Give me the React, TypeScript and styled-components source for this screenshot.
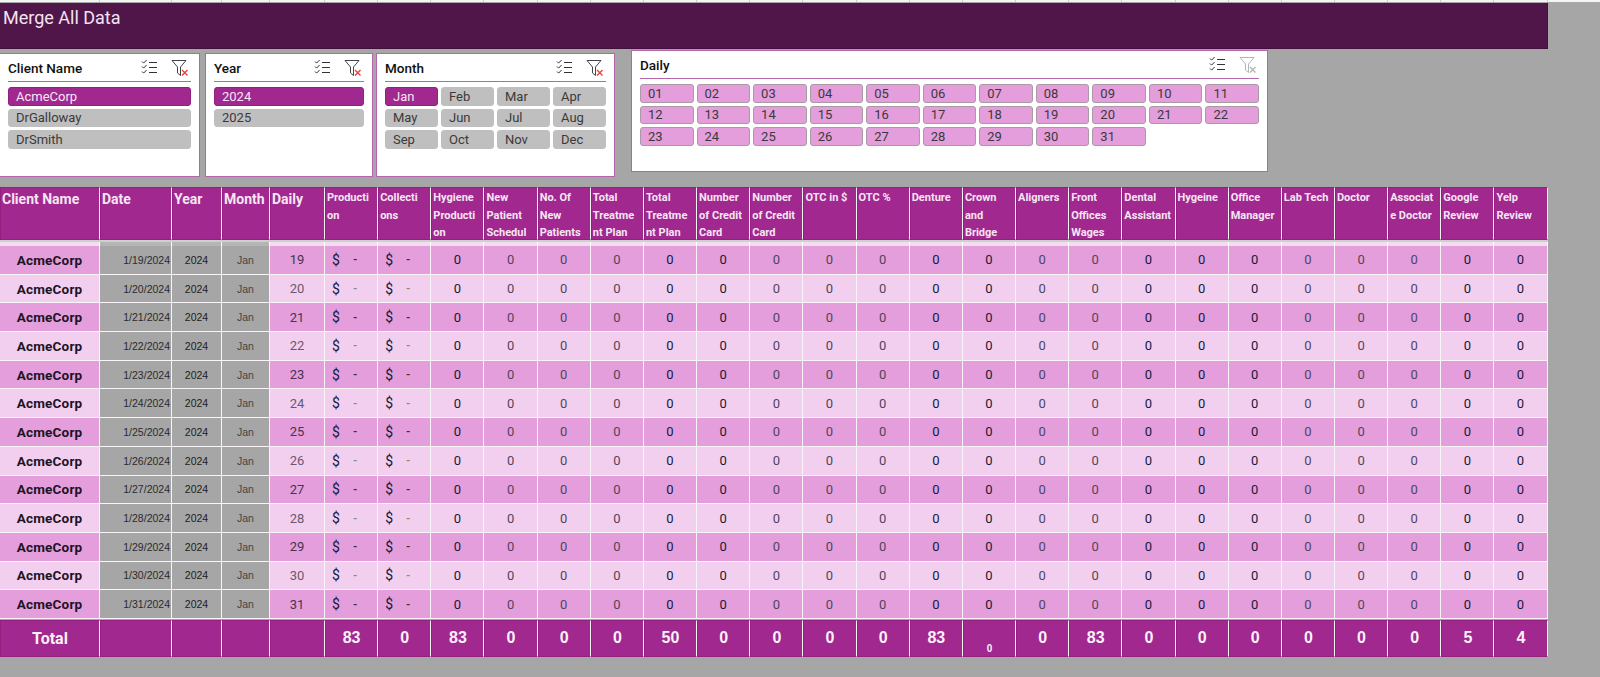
import styled, { createGlobalStyle } from 'styled-components';

const GlobalStyle = createGlobalStyle`
  html, body { margin: 0; padding: 0; background: #a6a6a6; }
  * { box-sizing: border-box; }
`;

const PURPLE = '#a0288f';
const COLUMNS = '100px 72px 50px 48px 55px repeat(23, 53.17px)';

const months = ['Jan', 'Feb', 'Mar', 'Apr', 'May', 'Jun', 'Jul', 'Aug', 'Sep', 'Oct', 'Nov', 'Dec'];
const days = Array.from({ length: 31 }, (_, i) => String(i + 1).padStart(2, '0'));
const rows = Array.from({ length: 13 }, (_, i) => 19 + i);

const headers: string[][] = [
  ['Client Name'], ['Date'], ['Year'], ['Month'], ['Daily'],
  ['Producti', 'on'], ['Collecti', 'ons'], ['Hygiene', 'Producti', 'on'], ['New', 'Patient', 'Schedul'],
  ['No. Of', 'New', 'Patients'], ['Total', 'Treatme', 'nt Plan'], ['Total', 'Treatme', 'nt Plan'],
  ['Number', 'of Credit', 'Card'], ['Number', 'of Credit', 'Card'], ['OTC in $'], ['OTC %'], ['Denture'],
  ['Crown', 'and', 'Bridge'], ['Aligners'], ['Front', 'Offices', 'Wages'], ['Dental', 'Assistant'], ['Hygeine'],
  ['Office', 'Manager'], ['Lab Tech'], ['Doctor'], ['Associat', 'e Doctor'], ['Google', 'Review'], ['Yelp', 'Review'],
];

// tono de los ceros por columna, desde Hygiene Production hasta Yelp Review
const zeroDark = [true, false, false, false, true, true, false, false, false, true, true, false, false, true, true, true, false, false, false, true, true];
const totals = ['83', '0', '83', '0', '0', '0', '50', '0', '0', '0', '0', '83', '0', '0', '83', '0', '0', '0', '0', '0', '0', '5', '4'];

const Page = styled.div`
  width: 1600px;
  height: 677px;
  overflow: hidden;
  background: #a6a6a6;
  font-family: Roboto, 'Liberation Sans', sans-serif;
`;

const TopStrip = styled.div`
  display: grid;
  grid-template-columns: ${COLUMNS};
  height: 3px;
  background: #f4f4f4;
  border-bottom: 1px solid #a8a8a8;
`;

const StripCell = styled.div`
  border-right: 1px solid #cfcfcf;
`;

const Banner = styled.div`
  width: 1548px;
  height: 46px;
  padding: 3px 0 0 3px;
  background: #50164a;
  border-right: 1px solid #43103d;
  border-bottom: 1px solid #43103d;
  color: #f3e3f0;
  font-size: 18px;
  line-height: 24px;
`;

const SlicerRow = styled.div`
  display: flex;
  align-items: flex-start;
  height: 139px;
  padding-top: 2px;
  margin-left: -1px;
`;

const Slicer = styled.section<{ $width: number; $height: number; $gap: number; $top: number }>`
  width: ${p => p.$width}px;
  height: ${p => p.$height}px;
  margin-left: ${p => p.$gap}px;
  margin-top: ${p => p.$top}px;
  padding: 0 8px;
  background: #fff;
  border: 1px solid #b565ab;
`;

const SlicerHead = styled.header`
  display: flex;
  align-items: center;
  height: 28px;
  margin-bottom: 5px;
  border-bottom: 1px solid #b565ab;
  color: #111;
  font-size: 13.5px;
  font-weight: 500;
`;

const SlicerTitle = styled.span`
  flex: 1;
`;

const HeadIcon = styled.svg<{ $right?: number }>`
  display: block;
  margin-right: ${p => p.$right ?? 0}px;
`;

const ItemGrid = styled.div<{ $cols: number }>`
  display: grid;
  grid-template-columns: repeat(${p => p.$cols}, 1fr);
  grid-auto-rows: 18.6px;
  gap: 3px;
`;

const Item = styled.div<{ $on?: boolean; $day?: boolean }>`
  display: flex;
  align-items: center;
  padding-left: 7px;
  border-radius: 3px;
  border: 1px solid ${p => (p.$on ? '#92207f' : p.$day ? '#a99aa6' : '#bfbfbf')};
  background: ${p => (p.$on ? PURPLE : p.$day ? '#e39edb' : '#bfbfbf')};
  color: ${p => (p.$on ? '#f7e6f3' : '#3a3a3a')};
  font-size: 13px;
`;

const Table = styled.div`
  width: 1548px;
  margin-top: -1px;
`;

const Row = styled.div<{ $height: number }>`
  display: grid;
  grid-template-columns: ${COLUMNS};
  height: ${p => p.$height}px;
`;

const HeadCell = styled.div<{ $big?: boolean }>`
  overflow: hidden;
  padding: ${p => (p.$big ? '4px 0 0 1px' : '1px 0 0 1px')};
  background: ${PURPLE};
  border: 1px solid #93207f;
  border-right: 1.5px solid #f4f4f4;
  color: #f6e6f3;
  font-size: ${p => (p.$big ? 14 : 11)}px;
  font-weight: 700;
  line-height: ${p => (p.$big ? 14 : 17.7)}px;
  white-space: nowrap;
`;

const HeadLine = styled.div``;

const Divider = styled.div`
  display: grid;
  grid-template-columns: ${COLUMNS};
  height: 6px;
  border-top: 2px solid #cfcfcf;
`;

const DividerCell = styled.div<{ $grey?: boolean }>`
  background: ${p => (p.$grey ? '#b5b5b5' : '#f3dcef')};
  border-right: 1.5px solid #fff;
`;

const Cell = styled.div<{ $odd: boolean; $grey?: boolean }>`
  display: flex;
  align-items: center;
  justify-content: center;
  background: ${p => (p.$grey ? '#a6a6a6' : p.$odd ? '#e39edb' : '#f3cfef')};
  border-right: 1.5px solid #f8f4f8;
  border-bottom: 1px solid #f8f4f8;
`;

const ClientCell = styled(Cell)`
  color: #1d1424;
  font-size: 13.5px;
  font-weight: 700;
  letter-spacing: 0.2px;
`;

const DateCell = styled(Cell)`
  justify-content: flex-end;
  padding-right: 1px;
  color: #2b2b2b;
  font-family: 'Liberation Sans', sans-serif;
  font-size: 10.5px;
`;

const YearCell = styled(Cell)`
  color: #1c1c1c;
  font-family: 'Liberation Sans', sans-serif;
  font-size: 10.5px;
`;

const MonthCell = styled(Cell)`
  color: #444;
  font-family: 'Liberation Sans', sans-serif;
  font-size: 10.5px;
`;

const DayCell = styled(Cell)`
  color: ${p => (p.$odd ? '#4a3350' : '#6a5870')};
  font-size: 13px;
`;

const MoneyCell = styled(Cell)`
  justify-content: flex-start;
  padding-left: 7px;
  color: #10203c;
  font-size: 14px;
`;

const Dash = styled.span<{ $odd: boolean }>`
  margin-left: 13px;
  color: ${p => (p.$odd ? '#333' : '#888')};
  font-size: 11px;
  font-weight: 700;
`;

const ZeroCell = styled(Cell)<{ $dark: boolean }>`
  color: ${p => (p.$dark ? '#161a3a' : '#50455c')};
  font-size: 13px;
`;

const TotalRow = styled(Row)`
  margin-top: 1px;
`;

const TotalCell = styled.div<{ $label?: boolean; $low?: boolean }>`
  display: flex;
  align-items: ${p => (p.$low ? 'flex-end' : 'center')};
  justify-content: center;
  padding-bottom: ${p => (p.$low ? 2 : 0)}px;
  background: ${PURPLE};
  border: 1px solid #93207f;
  border-right: 1.5px solid #f4f4f4;
  color: #fbf1f9;
  font-family: ${p => (p.$label ? 'Roboto, sans-serif' : "'Liberation Sans', sans-serif")};
  font-size: ${p => (p.$low ? 10 : 16)}px;
  font-weight: 700;
`;

const ChecklistIcon = () => (
  <HeadIcon $right={13} width="17" height="17" viewBox="0 0 17 17" fill="none" stroke="#333" strokeWidth="1">
    <path d="M1 2.5l1.6 1.6L5.6 1M1 7.5l1.6 1.6L5.6 6M1 12.5l1.6 1.6L5.6 11" />
    <path d="M8 3.5h8M8 8.5h8M8 13.5h8" />
  </HeadIcon>
);

const ClearFilterIcon = ({ active = true }: { active?: boolean }) => (
  <HeadIcon $right={2} width="18" height="18" viewBox="0 0 18 18" fill="none">
    <path d="M1 1.5h14L9.5 8v8.5L6.5 14V8z" stroke={active ? '#444' : '#b5b5b5'} strokeWidth="1" />
    <path d="M11 11l5.5 5.5M16.5 11L11 16.5" stroke={active ? '#e8403c' : '#b5b5b5'} strokeWidth="1.4" />
  </HeadIcon>
);

const SlicerHeader = ({ title, active = true }: { title: string; active?: boolean }) => (
  <SlicerHead>
    <SlicerTitle>{title}</SlicerTitle>
    <ChecklistIcon />
    <ClearFilterIcon active={active} />
  </SlicerHead>
);

export default function App() {
  return (
    <Page>
      <GlobalStyle />
      <TopStrip>
        {headers.map((_, i) => (
          <StripCell key={i} />
        ))}
      </TopStrip>
      <Banner>Merge All Data</Banner>

      <SlicerRow>
        <Slicer $width={201} $height={124} $gap={0} $top={2}>
          <SlicerHeader title="Client Name" />
          <ItemGrid $cols={1}>
            <Item $on>AcmeCorp</Item>
            <Item>DrGalloway</Item>
            <Item>DrSmith</Item>
          </ItemGrid>
        </Slicer>
        <Slicer $width={168} $height={124} $gap={5} $top={2}>
          <SlicerHeader title="Year" />
          <ItemGrid $cols={1}>
            <Item $on>2024</Item>
            <Item>2025</Item>
          </ItemGrid>
        </Slicer>
        <Slicer $width={239} $height={124} $gap={3} $top={2}>
          <SlicerHeader title="Month" />
          <ItemGrid $cols={4}>
            {months.map((m, i) => (
              <Item key={m} $on={i === 0}>{m}</Item>
            ))}
          </ItemGrid>
        </Slicer>
        <Slicer $width={637} $height={122} $gap={16} $top={-1}>
          <SlicerHeader title="Daily" active={false} />
          <ItemGrid $cols={11}>
            {days.map(d => (
              <Item key={d} $day>{d}</Item>
            ))}
          </ItemGrid>
        </Slicer>
      </SlicerRow>

      <Table>
        <Row $height={53}>
          {headers.map((lines, i) => (
            <HeadCell key={i} $big={i < 5}>
              {lines.map((line, j) => (
                <HeadLine key={j}>{line}</HeadLine>
              ))}
            </HeadCell>
          ))}
        </Row>
        <Divider>
          {headers.map((_, i) => (
            <DividerCell key={i} $grey={i >= 1 && i <= 3} />
          ))}
        </Divider>
        {rows.map((day, r) => {
          const odd = r % 2 === 0;
          return (
            <Row key={day} $height={28.7}>
              <ClientCell $odd={odd}>AcmeCorp</ClientCell>
              <DateCell $odd={odd} $grey>1/{day}/2024</DateCell>
              <YearCell $odd={odd} $grey>2024</YearCell>
              <MonthCell $odd={odd} $grey>Jan</MonthCell>
              <DayCell $odd={odd}>{day}</DayCell>
              <MoneyCell $odd={odd}>$<Dash $odd={odd}>-</Dash></MoneyCell>
              <MoneyCell $odd={odd}>$<Dash $odd={odd}>-</Dash></MoneyCell>
              {zeroDark.map((dark, i) => (
                <ZeroCell key={i} $odd={odd} $dark={dark}>0</ZeroCell>
              ))}
            </Row>
          );
        })}
        <TotalRow $height={37}>
          <TotalCell $label>Total</TotalCell>
          <TotalCell />
          <TotalCell />
          <TotalCell />
          <TotalCell />
          {totals.map((t, i) => (
            <TotalCell key={i} $low={i === 12}>{t}</TotalCell>
          ))}
        </TotalRow>
      </Table>
    </Page>
  );
}
